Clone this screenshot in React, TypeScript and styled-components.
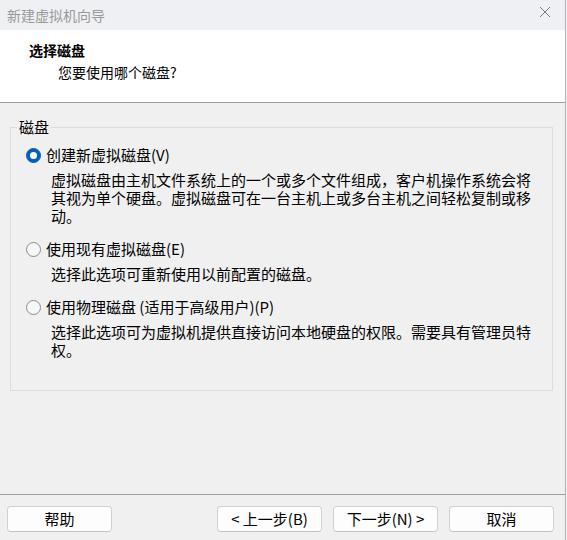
import styled, { createGlobalStyle } from "styled-components";

const GlobalStyle = createGlobalStyle`
  html, body {
    margin: 0;
    padding: 0;
    background: #f0f0f0;
  }
  body {
    font-family: "Noto Sans CJK SC", "Noto Sans", sans-serif;
    color: #000;
  }
`;

const Window = styled.div`
  width: 566px;
  height: 540px;
  box-sizing: border-box;
  border-right: 1px solid #b4b4b4;
  display: flex;
  flex-direction: column;
  background: #f0f0f0;
`;

const TitleBar = styled.div`
  height: 30px;
  flex: none;
  display: flex;
  align-items: center;
  justify-content: space-between;
  padding: 0 14px 0 7px;
  background: #eff0f4;
  color: #999;
  font-size: 14px;
`;

const CloseButton = styled.span`
  display: flex;
  width: 12px;
  height: 12px;
  margin-top: -6px;
`;

const Header = styled.div`
  height: 73px;
  flex: none;
  box-sizing: border-box;
  background: #fff;
  border-bottom: 1px solid #a0a0a0;
  padding: 11px 0 0 29px;
  font-size: 14px;
  line-height: 18px;
`;

const HeaderTitle = styled.div`
  font-weight: bold;
`;

const HeaderSub = styled.div`
  margin: 4px 0 0 29px;
`;

const Body = styled.div`
  flex: 1;
  padding: 0 12px 0 10px;
`;

const Group = styled.fieldset`
  margin: 15px 0 0;
  padding: 10px 0 31px;
  border: 1px solid #dcdcdc;
  font-size: 15px;
  line-height: 18px;
`;

const Legend = styled.legend`
  margin-left: 6px;
  padding: 0 2px;
  font-size: 15px;
  line-height: 18px;
`;

const Option = styled.div`
  & + & {
    margin-top: 15px;
  }
`;

const RadioRow = styled.label`
  display: flex;
  align-items: center;
  gap: 5px;
  height: 18px;
  padding-left: 15px;
`;

const Radio = styled.span<{ $checked?: boolean }>`
  width: 15px;
  height: 15px;
  flex: none;
  box-sizing: border-box;
  border-radius: 50%;
  display: flex;
  align-items: center;
  justify-content: center;
  background: ${(p) => (p.$checked ? "#005fb8" : "#f7f7f7")};
  border: 1px solid ${(p) => (p.$checked ? "#005fb8" : "#8a8a8a")};
  &::after {
    content: "";
    display: ${(p) => (p.$checked ? "block" : "none")};
    width: 7px;
    height: 7px;
    border-radius: 50%;
    background: #fff;
  }
`;

const Desc = styled.div`
  margin: 7px 0 0 40px;
  max-width: 486px;
`;

const Footer = styled.div`
  height: 46px;
  flex: none;
  box-sizing: border-box;
  border-top: 1px solid #a0a0a0;
  display: flex;
  align-items: flex-start;
  padding: 11px 11px 0 7px;
  gap: 11px;
`;

const Spacer = styled.div`
  flex: 1;
`;

const Button = styled.button`
  width: 105px;
  height: 26px;
  box-sizing: border-box;
  background: #fdfdfd;
  border: 1px solid #d0d0d0;
  border-bottom-color: #c4c4c4;
  border-radius: 4px;
  font-family: "Noto Sans CJK SC", "Noto Sans", sans-serif;
  font-size: 15px;
  line-height: 18px;
  color: #000;
  padding: 0;
`;

const options = [
  {
    label: "创建新虚拟磁盘(V)",
    desc: "虚拟磁盘由主机文件系统上的一个或多个文件组成，客户机操作系统会将其视为单个硬盘。虚拟磁盘可在一台主机上或多台主机之间轻松复制或移动。",
    checked: true,
  },
  {
    label: "使用现有虚拟磁盘(E)",
    desc: "选择此选项可重新使用以前配置的磁盘。",
  },
  {
    label: "使用物理磁盘 (适用于高级用户)(P)",
    desc: "选择此选项可为虚拟机提供直接访问本地硬盘的权限。需要具有管理员特权。",
  },
];

export default function App() {
  return (
    <>
      <GlobalStyle />
      <Window>
        <TitleBar>
          <span>新建虚拟机向导</span>
          <CloseButton>
            <svg width="12" height="12" viewBox="0 0 12 12">
              <path d="M1 1L11 11M11 1L1 11" stroke="#7a7a7a" strokeWidth="1" fill="none" />
            </svg>
          </CloseButton>
        </TitleBar>
        <Header>
          <HeaderTitle>选择磁盘</HeaderTitle>
          <HeaderSub>您要使用哪个磁盘?</HeaderSub>
        </Header>
        <Body>
          <Group>
            <Legend>磁盘</Legend>
            {options.map((o) => (
              <Option key={o.label}>
                <RadioRow>
                  <Radio $checked={o.checked} />
                  {o.label}
                </RadioRow>
                <Desc>{o.desc}</Desc>
              </Option>
            ))}
          </Group>
        </Body>
        <Footer>
          <Button>帮助</Button>
          <Spacer />
          <Button>&lt; 上一步(B)</Button>
          <Button>下一步(N) &gt;</Button>
          <Button>取消</Button>
        </Footer>
      </Window>
    </>
  );
}
